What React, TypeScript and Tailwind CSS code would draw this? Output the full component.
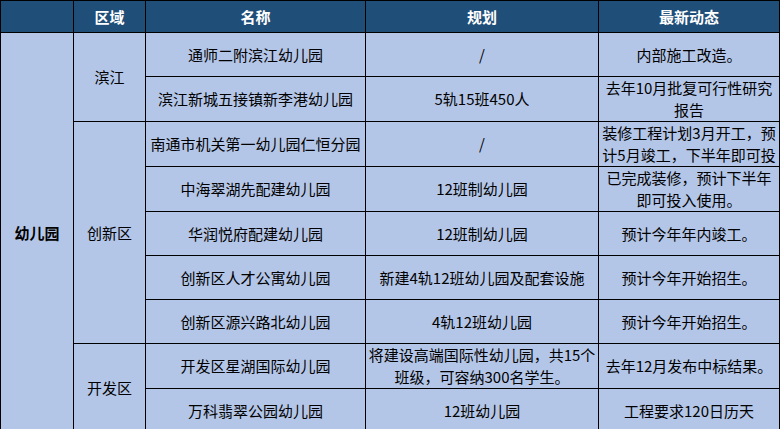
const rows: {
  name: string;
  plan: string[];
  news: string[];
}[] = [
  { name: "通师二附滨江幼儿园", plan: ["/"], news: ["内部施工改造。"] },
  { name: "滨江新城五接镇新李港幼儿园", plan: ["5轨15班450人"], news: ["去年10月批复可行性研究", "报告"] },
  {
    name: "南通市机关第一幼儿园仁恒分园",
    plan: ["/"],
    news: ["装修工程计划3月开工，预", "计5月竣工，下半年即可投"],
  },
  { name: "中海翠湖先配建幼儿园", plan: ["12班制幼儿园"], news: ["已完成装修，预计下半年", "即可投入使用。"] },
  { name: "华润悦府配建幼儿园", plan: ["12班制幼儿园"], news: ["预计今年年内竣工。"] },
  { name: "创新区人才公寓幼儿园", plan: ["新建4轨12班幼儿园及配套设施"], news: ["预计今年开始招生。"] },
  { name: "创新区源兴路北幼儿园", plan: ["4轨12班幼儿园"], news: ["预计今年开始招生。"] },
  { name: "开发区星湖国际幼儿园", plan: ["将建设高端国际性幼儿园，共15个", "班级，可容纳300名学生。"], news: ["去年12月发布中标结果。"] },
  { name: "万科翡翠公园幼儿园", plan: ["12班幼儿园"], news: ["工程要求120日历天"] },
];

const regions: Record<number, { label: string; span: number }> = {
  0: { label: "滨江", span: 2 },
  2: { label: "创新区", span: 5 },
  7: { label: "开发区", span: 2 },
};

function Lines({ lines }: { lines: string[] }) {
  return (
    <>
      {lines.map((l, i) => (
        <div key={i} className="whitespace-nowrap">
          {l}
        </div>
      ))}
    </>
  );
}

export default function App() {
  const cell = "border border-black text-center align-middle p-0";
  return (
    <div className="bg-white w-[780px] h-[429px] font-['Noto_Sans_CJK_SC','Noto_Sans',sans-serif] text-[15px] leading-[22px] text-black">
      <table className="table-fixed border-collapse w-[779px] bg-[#b4c6e7]">
        <colgroup>
          <col className="w-[73px]" />
          <col className="w-[72px]" />
          <col className="w-[220px]" />
          <col className="w-[233px]" />
          <col className="w-[181px]" />
        </colgroup>
        <thead>
          <tr className="h-[32px] bg-[#1f4e79] text-white font-bold">
            <th className={cell}></th>
            <th className={cell}>区域</th>
            <th className={cell}>名称</th>
            <th className={cell}>规划</th>
            <th className={cell}>最新动态</th>
          </tr>
        </thead>
        <tbody>
          {rows.map((r, i) => (
            <tr key={i} className="h-[44px]">
              {i === 0 && (
                <td rowSpan={rows.length} className={`${cell} font-bold`}>
                  幼儿园
                </td>
              )}
              {regions[i] && (
                <td rowSpan={regions[i].span} className={cell}>
                  {regions[i].label}
                </td>
              )}
              <td className={cell}>{r.name}</td>
              <td className={cell}>
                <Lines lines={r.plan} />
              </td>
              <td className={cell}>
                <Lines lines={r.news} />
              </td>
            </tr>
          ))}
        </tbody>
      </table>
    </div>
  );
}
